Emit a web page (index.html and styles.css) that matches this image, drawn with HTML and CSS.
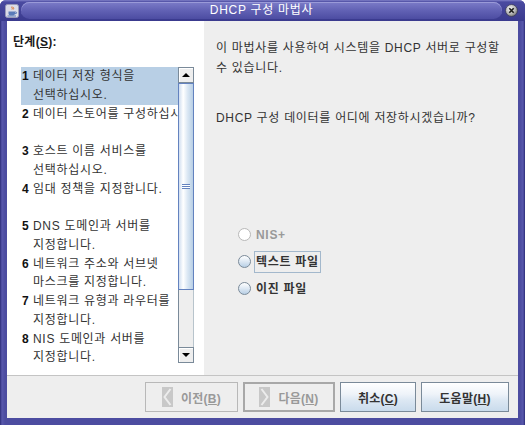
FILE: index.html
```html
<!DOCTYPE html>
<html lang="ko">
<head>
<meta charset="utf-8">
<title>DHCP 구성 마법사</title>
<link rel="stylesheet" href="styles.css">
</head>
<body>
<div class="window">
  <div class="titlebar">
    <div class="app-icon">
      <svg width="14" height="14" viewBox="0 0 14 14">
        <rect x="0.5" y="0.5" width="13" height="13" rx="2" fill="#dcdce8" stroke="#9a9ab8"/>
        <path d="M7 2.5c-1 1 1 1.5 0 3M8.5 3c-0.8 0.8 0.8 1.2 0 2.4" stroke="#e0702a" stroke-width="1" fill="none"/>
        <path d="M3.5 7.5h6.5v2c0 1.2-1 2-2 2h-2.5c-1 0-2-0.8-2-2z" fill="#5a7ab8"/>
        <path d="M10 8h1c0.8 0 0.8 1.6 0 1.6h-1" stroke="#5a7ab8" fill="none"/>
        <path d="M2.5 12h8.5" stroke="#5a7ab8"/>
      </svg>
    </div>
    <div class="title-pill"><span class="title">DHCP 구성 마법사</span></div>
    <div class="close-btn">
      <svg width="13" height="13" viewBox="0 0 13 13">
        <defs>
          <radialGradient id="cg" cx="0.4" cy="0.35" r="0.7">
            <stop offset="0" stop-color="#f4f4f4"/>
            <stop offset="0.6" stop-color="#b8b8b8"/>
            <stop offset="1" stop-color="#6a6a6a"/>
          </radialGradient>
        </defs>
        <circle cx="6.5" cy="6.5" r="6" fill="url(#cg)" stroke="#3a3a5a" stroke-width="0.8"/>
        <path d="M4.3 4.3l4.4 4.4M8.7 4.3l-4.4 4.4" stroke="#1a1a1a" stroke-width="1.6"/>
      </svg>
    </div>
  </div>
  <div class="frame">
    <div class="main">
      <div class="left">
        <div class="steps-label">단계(<u>S</u>):</div>
        <div class="steps">
          <ul class="step-list">
            <li class="step active"><b class="num">1</b><span class="txt">데이터 저장 형식을<br>선택하십시오.</span></li>
            <li class="step"><b class="num">2</b><span class="txt">데이터 스토어를 구성하십시오.</span></li>
            <li class="step"><b class="num">3</b><span class="txt">호스트 이름 서비스를<br>선택하십시오.</span></li>
            <li class="step"><b class="num">4</b><span class="txt">임대 정책을 지정합니다.</span></li>
            <li class="step"><b class="num">5</b><span class="txt">DNS 도메인과 서버를<br>지정합니다.</span></li>
            <li class="step"><b class="num">6</b><span class="txt">네트워크 주소와 서브넷<br>마스크를 지정합니다.</span></li>
            <li class="step"><b class="num">7</b><span class="txt">네트워크 유형과 라우터를<br>지정합니다.</span></li>
            <li class="step"><b class="num">8</b><span class="txt">NIS 도메인과 서버를<br>지정합니다.</span></li>
          </ul>
          <div class="vscroll">
            <div class="sb-btn"><span class="arrow-up"></span></div>
            <div class="sb-thumb"><span class="grip"></span></div>
            <div class="sb-track"></div>
            <div class="sb-btn down"><span class="arrow-down"></span></div>
          </div>
        </div>
      </div>
      <div class="right">
        <p class="intro">이 마법사를 사용하여 시스템을 DHCP 서버로 구성할<br>수 있습니다.</p>
        <p class="question">DHCP 구성 데이터를 어디에 저장하시겠습니까?</p>
        <div class="radios">
          <div class="radio disabled"><span class="dot"></span><span class="label">NIS+</span></div>
          <div class="radio"><span class="dot"></span><span class="label focus">텍스트 파일</span></div>
          <div class="radio"><span class="dot"></span><span class="label">이진 파일</span></div>
        </div>
      </div>
    </div>
    <div class="buttons">
      <div class="btn disabled w-prev"><span class="chev"><svg width="11" height="20" viewBox="0 0 11 20"><path d="M8.5 2L2.5 10l6 8" stroke="#ececec" stroke-width="2" fill="none"/></svg></span><span>이전(<u>B</u>)</span></div>
      <div class="btn disabled default w-next"><span class="chev"><svg width="11" height="20" viewBox="0 0 11 20"><path d="M2.5 2l6 8-6 8" stroke="#ececec" stroke-width="2" fill="none"/></svg></span><span>다음(<u>N</u>)</span></div>
      <div class="btn w-cancel"><span>취소(<u>C</u>)</span></div>
      <div class="btn w-help"><span>도움말(<u>H</u>)</span></div>
    </div>
  </div>
</div>
</body>
</html>
```

FILE: styles.css
```css
html, body {
  margin: 0;
  padding: 0;
}
body {
  width: 525px;
  height: 425px;
  overflow: hidden;
  background: #ffffff;
  font-family: "Liberation Sans", "Noto Sans CJK KR", sans-serif;
  font-size: 12px;
  letter-spacing: 0.7px;
  color: #333333;
}
.window {
  width: 525px;
  height: 425px;
  display: flex;
  flex-direction: column;
  background: linear-gradient(to right, #2c2c78 0, #5858ac 2px, #4c4ca0 5px, #4c4ca0 calc(100% - 5px), #5858ac calc(100% - 2px), #2c2c78 100%);
  border-radius: 6px 6px 0 0;
  overflow: hidden;
}
.titlebar {
  height: 21px;
  flex: none;
  display: flex;
  align-items: center;
  background: linear-gradient(#8080c8 0, #4a4aa0 2px, #3a3a8e 100%);
}
.app-icon {
  width: 14px;
  height: 14px;
  margin-left: 5px;
  display: flex;
}
.title-pill {
  flex: 1;
  height: 17px;
  margin: 0 3px 0 2px;
  border-radius: 9px;
  background: linear-gradient(#7c7cc8 0%, #6464b6 45%, #4c4ca2 100%);
  box-shadow: inset 0 1px 0 #9a9ad8;
  display: flex;
  align-items: center;
  justify-content: center;
}
.title {
  color: #ffffff;
  font-size: 12px;
  line-height: 17px;
}
.close-btn {
  width: 13px;
  height: 13px;
  margin-right: 7px;
  display: flex;
}
.frame {
  flex: 1;
  display: flex;
  flex-direction: column;
  margin: 0 7px 7px 7px;
  background: #eeeeee;
}
.main {
  height: 354px;
  display: flex;
}
.left {
  width: 197px;
  background: #ffffff;
  padding-top: 12px;
  box-sizing: border-box;
}
.steps-label {
  font-weight: bold;
  color: #1a1a1a;
  line-height: 18px;
  padding-left: 6px;
  letter-spacing: 0.3px;
}
.steps {
  display: flex;
  margin-top: 16px;
  margin-left: 14px;
  height: 296px;
}
.step-list {
  list-style: none;
  margin: 0;
  padding: 0;
  width: 157px;
  height: 298px;
  overflow: hidden;
}
.step {
  height: 37.5px;
  display: flex;
  line-height: 18.75px;
  padding-left: 1px;
  white-space: nowrap;
  overflow: hidden;
}
.step.active {
  background: #b8cfe5;
}
.num {
  width: 11px;
  flex: none;
  color: #111111;
}
.txt {
  color: #333333;
  overflow: hidden;
}
.vscroll {
  width: 16px;
  height: 296px;
  display: flex;
  flex-direction: column;
}
.sb-btn {
  height: 16px;
  box-sizing: border-box;
  border: 1px solid #7a8a99;
  background: #eeeeee;
  box-shadow: inset 1px 1px 0 #ffffff;
  display: flex;
  align-items: center;
  justify-content: center;
}
.arrow-up {
  width: 0;
  height: 0;
  border-left: 4px solid transparent;
  border-right: 4px solid transparent;
  border-bottom: 4px solid #000000;
}
.arrow-down {
  width: 0;
  height: 0;
  border-left: 4px solid transparent;
  border-right: 4px solid transparent;
  border-top: 4px solid #000000;
}
.sb-thumb {
  height: 207px;
  box-sizing: border-box;
  border: 1px solid #6382bf;
  background: linear-gradient(to right, #d0def0 0%, #ffffff 30%, #dce8f4 60%, #b8cfe5 100%);
  display: flex;
  align-items: center;
  justify-content: center;
}
.grip {
  width: 8px;
  height: 5px;
  background: repeating-linear-gradient(#6382bf 0, #6382bf 1px, #ffffff 1px, #ffffff 2px);
}
.sb-track {
  flex: 1;
  background: #eeeeee;
  border-left: 1px solid #7a8a99;
  border-right: 1px solid #b8c4cc;
}
.right {
  flex: 1;
  padding: 17px 12px 0 12px;
  background: #eeeeee;
}
.intro, .question {
  margin: 0;
  line-height: 20px;
  color: #333333;
}
.question {
  margin-top: 30px;
}
.radios {
  margin-top: 93px;
  margin-left: 22px;
  display: flex;
  flex-direction: column;
}
.radio {
  height: 27px;
  display: flex;
  align-items: center;
  font-weight: bold;
  color: #333333;
}
.dot {
  width: 13px;
  height: 13px;
  box-sizing: border-box;
  border-radius: 50%;
  border: 1px solid #7a8a99;
  background: linear-gradient(#ffffff 0%, #dde8f3 50%, #b8cfe5 100%);
  margin-right: 3px;
  flex: none;
}
.radio.disabled {
  color: #999999;
}
.radio.disabled .dot {
  border-color: #b8b8b8;
  background: #ffffff;
}
.label {
  padding: 2px 1px;
  border: 1px solid transparent;
  line-height: 16px;
}
.label.focus {
  border-color: #a3b8cc;
}
.buttons {
  height: 43px;
  box-sizing: border-box;
  border-top: 1px solid #c4c4c4;
  display: flex;
  justify-content: flex-end;
  gap: 5px;
  padding: 6px 9px 0 0;
}
.btn {
  height: 30px;
  box-sizing: border-box;
  border: 1px solid #7a8a99;
  background: linear-gradient(#ffffff 0%, #eef3f9 40%, #dde8f3 60%, #c9dbec 100%);
  display: flex;
  align-items: center;
  justify-content: center;
  font-weight: bold;
  color: #333333;
  gap: 8px;
  letter-spacing: 0.3px;
}
.btn.disabled {
  background: #eeeeee;
  border-color: #b8b8b8;
  color: #999999;
}
.btn.default {
  border: 2px solid #a8a8a8;
}
.chev {
  width: 11px;
  height: 20px;
  background: #c8c8c8;
  display: flex;
}
.w-prev { width: 93px; }
.w-next { width: 92px; }
.w-cancel { width: 76px; }
.w-help { width: 88px; }
u {
  text-decoration: underline;
}
```
